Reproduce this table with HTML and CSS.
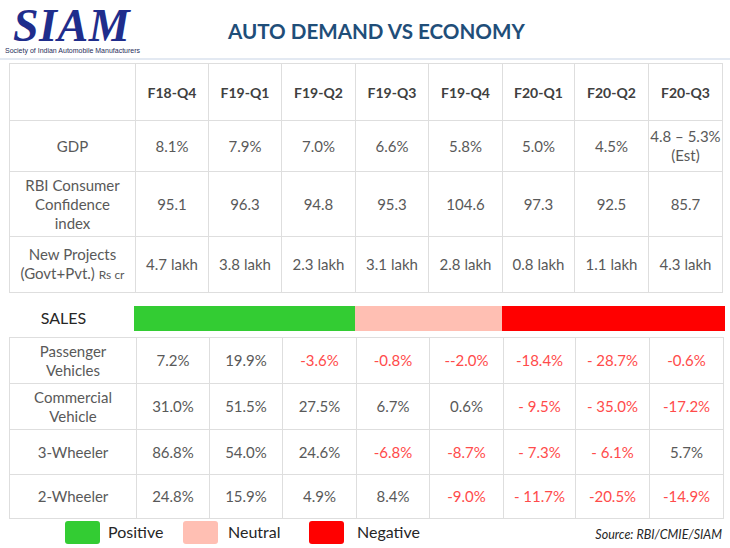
FILE: index.html
```html
<!DOCTYPE html>
<html>
<head>
<meta charset="utf-8">
<link rel="stylesheet" href="styles.css">
</head>
<body>
<div class="page">
  <header class="header">
    <div class="logo">
      <div class="logo-word">SIAM</div>
      <div class="logo-sub">Society of Indian Automobile Manufacturers</div>
    </div>
    <h1 class="title">AUTO DEMAND VS ECONOMY</h1>
  </header>

  <main class="main">
    <table class="grid econ">
      <colgroup>
        <col class="c0"><col class="c1"><col class="c2"><col class="c3"><col class="c4"><col class="c5"><col class="c6"><col class="c7"><col class="c8">
      </colgroup>
      <tr class="r-head">
        <td></td><th>F18-Q4</th><th>F19-Q1</th><th>F19-Q2</th><th>F19-Q3</th><th>F19-Q4</th><th>F20-Q1</th><th>F20-Q2</th><th>F20-Q3</th>
      </tr>
      <tr class="r-gdp">
        <td class="lbl">GDP</td><td>8.1%</td><td>7.9%</td><td>7.0%</td><td>6.6%</td><td>5.8%</td><td>5.0%</td><td>4.5%</td><td class="est">4.8 – 5.3%<br>(Est)</td>
      </tr>
      <tr class="r-rbi">
        <td class="lbl">RBI Consumer<br>Confidence<br>index</td><td>95.1</td><td>96.3</td><td>94.8</td><td>95.3</td><td>104.6</td><td>97.3</td><td>92.5</td><td>85.7</td>
      </tr>
      <tr class="r-proj">
        <td class="lbl">New Projects<br>(Govt+Pvt.) <span class="small">Rs cr</span></td><td>4.7 lakh</td><td>3.8 lakh</td><td>2.3 lakh</td><td>3.1 lakh</td><td>2.8 lakh</td><td>0.8 lakh</td><td>1.1 lakh</td><td>4.3 lakh</td>
      </tr>
    </table>

    <div class="sales">
      <div class="sales-label">SALES</div>
      <div class="sales-bar">
        <div class="seg pos"></div>
        <div class="seg neu"></div>
        <div class="seg neg"></div>
      </div>
    </div>

    <table class="grid salesgrid">
      <colgroup>
        <col class="d0"><col class="c1"><col class="c2"><col class="c3"><col class="c4"><col class="c5"><col class="c6"><col class="c7"><col class="c8">
      </colgroup>
      <tr class="r-s">
        <td class="lbl">Passenger<br>Vehicles</td><td>7.2%</td><td>19.9%</td><td class="red">-3.6%</td><td class="red">-0.8%</td><td class="red">--2.0%</td><td class="red">-18.4%</td><td class="red">- 28.7%</td><td class="red">-0.6%</td>
      </tr>
      <tr class="r-s">
        <td class="lbl">Commercial<br>Vehicle</td><td>31.0%</td><td>51.5%</td><td>27.5%</td><td>6.7%</td><td>0.6%</td><td class="red">- 9.5%</td><td class="red">- 35.0%</td><td class="red">-17.2%</td>
      </tr>
      <tr class="r-s3">
        <td class="lbl">3-Wheeler</td><td>86.8%</td><td>54.0%</td><td>24.6%</td><td class="red">-6.8%</td><td class="red">-8.7%</td><td class="red">- 7.3%</td><td class="red">- 6.1%</td><td>5.7%</td>
      </tr>
      <tr class="r-s2">
        <td class="lbl">2-Wheeler</td><td>24.8%</td><td>15.9%</td><td>4.9%</td><td>8.4%</td><td class="red">-9.0%</td><td class="red">- 11.7%</td><td class="red">-20.5%</td><td class="red">-14.9%</td>
      </tr>
    </table>

    <div class="legend">
      <div class="key"><span class="sw pos"></span><span class="kt">Positive</span></div>
      <div class="key"><span class="sw neu"></span><span class="kt">Neutral</span></div>
      <div class="key"><span class="sw neg"></span><span class="kt">Negative</span></div>
      <div class="source">Source: RBI/CMIE/SIAM</div>
    </div>
  </main>
</div>
</body>
</html>
```

FILE: styles.css
```css
* { box-sizing: border-box; }
html, body { margin: 0; padding: 0; background: #ffffff; }
.page {
  width: 730px;
  height: 548px;
  overflow: hidden;
  font-family: Lato, "Open Sans", sans-serif;
  color: #595959;
}
.header {
  height: 60px;
  display: flex;
  align-items: flex-start;
  border-bottom: 2px solid #e3e9f2;
}
.logo {
  width: 228px;
  padding: 0 0 0 5px;
  display: flex;
  flex-direction: column;
}
.logo-word {
  font-family: "Liberation Serif", serif;
  font-weight: bold;
  font-style: italic;
  font-size: 46px;
  line-height: 42px;
  color: #1f2d8c;
  padding-left: 8px;
  padding-right: 6px;
  margin-top: 5px;
  letter-spacing: 0.5px;
}
.logo-sub {
  font-family: "Liberation Sans", sans-serif;
  font-size: 7px;
  line-height: 8px;
  color: #1f2d5a;
  white-space: nowrap;
}
.title {
  margin: 19px 0 0 0;
  font-family: Lato, sans-serif;
  font-weight: bold;
  font-size: 20.6px;
  line-height: 24px;
  color: #1f4e79;
}
.main {
  padding: 3px 0 0 9px;
}
.grid {
  border-collapse: collapse;
  table-layout: fixed;
  width: 713px;
}
.grid td, .grid th {
  border: 1px solid #dedede;
  text-align: center;
  vertical-align: middle;
  padding: 0;
  font-size: 15px;
  line-height: 19px;
  color: #595959;
  font-weight: normal;
}
.grid th {
  font-weight: bold;
  font-size: 14px;
  color: #404040;
}
.c0 { width: 126px; }
.d0 { width: 127px; }
.c1 { width: 73px; }
.c2 { width: 73px; }
.c3 { width: 74px; }
.c4 { width: 73px; }
.c5 { width: 74px; }
.c6 { width: 72px; }
.c7 { width: 74px; }
.c8 { width: 74px; }
.r-head { height: 57px; }
.r-gdp { height: 51px; }
.r-rbi { height: 65px; }
.r-proj { height: 56px; }
.r-s { height: 46px; }
.r-s3 { height: 45px; }
.r-s2 { height: 44px; }
.est { line-height: 18px; }
.small { font-size: 12px; }
.lbl { line-height: 19px; }
.red { color: #ff4b4b !important; }

.sales {
  height: 44px;
  display: flex;
  align-items: center;
}
.sales-label {
  width: 125px;
  padding-right: 16px;
  text-align: center;
  font-size: 16px;
  color: #262626;
  padding-top: 4px;
}
.sales-bar {
  display: flex;
  height: 25px;
  width: 591px;
  margin-top: 6px;
}
.seg { height: 100%; }
.seg.pos { width: 221px; background: #33cc33; }
.seg.neu { width: 147px; background: #ffbfb3; }
.seg.neg { width: 223px; background: #ff0000; }

.legend {
  height: 30px;
  display: flex;
  align-items: flex-start;
  padding-left: 56px;
  padding-top: 2px;
}
.key {
  display: flex;
  align-items: center;
}
.sw {
  width: 35px;
  height: 23px;
  border-radius: 3px;
  display: inline-block;
}
.sw.pos { background: #33cc33; }
.sw.neu { background: #ffbfb3; }
.sw.neg { background: #ff0000; }
.kt {
  font-size: 16px;
  color: #262626;
  margin-left: 8px;
  margin-top: -2px;
}
.key:nth-child(1) .kt { width: 75px; }
.key:nth-child(2) .kt { width: 81px; margin-left: 10px; }
.key:nth-child(3) .kt { margin-left: 13px; }
.source {
  margin-left: auto;
  margin-right: 8px;
  font-style: italic;
  font-size: 12.5px;
  color: #262626;
  padding-top: 6px;
}
```
